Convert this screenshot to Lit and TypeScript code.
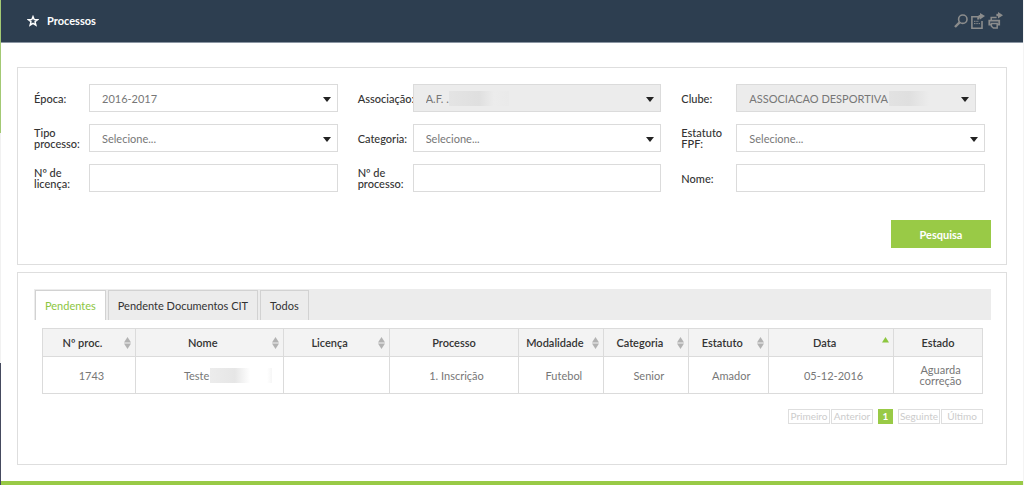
import { LitElement, html, css, svg, nothing } from "lit";
import { customElement, state } from "lit/decorators.js";
import { classMap } from "lit/directives/class-map.js";

interface Field {
  id: string;
  label: string;
  kind: "select" | "text";
  value?: string;
  disabled?: boolean;
  mask?: string;
}

interface Column {
  title: string;
  width: number;
  sort?: "both" | "asc";
}

const FIELDS: Field[] = [
  { id: "epoca", label: "Época:", kind: "select", value: "2016-2017" },
  { id: "associacao", label: "Associação:", kind: "select", value: "A.F. .", disabled: true, mask: "association" },
  { id: "clube", label: "Clube:", kind: "select", value: "ASSOCIACAO DESPORTIVA", disabled: true, mask: "club" },
  { id: "tipo", label: "Tipo processo:", kind: "select", value: "Selecione..." },
  { id: "categoria", label: "Categoria:", kind: "select", value: "Selecione..." },
  { id: "estatuto", label: "Estatuto FPF:", kind: "select", value: "Selecione..." },
  { id: "licenca", label: "Nº de licença:", kind: "text" },
  { id: "processo", label: "Nº de processo:", kind: "text" },
  { id: "nome", label: "Nome:", kind: "text" },
];

const COLUMNS: Column[] = [
  { title: "Nº proc.", width: 93, sort: "both" },
  { title: "Nome", width: 148, sort: "both" },
  { title: "Licença", width: 106, sort: "both" },
  { title: "Processo", width: 130 },
  { title: "Modalidade", width: 85, sort: "both" },
  { title: "Categoria", width: 85, sort: "both" },
  { title: "Estatuto", width: 80, sort: "both" },
  { title: "Data", width: 125, sort: "asc" },
  { title: "Estado", width: 89 },
];

const TABS = ["Pendentes", "Pendente Documentos CIT", "Todos"];

const starIcon = svg`<svg width="12" height="12" viewBox="0 0 12 12" fill="none" stroke="#fff" stroke-width="1.4" stroke-linejoin="miter">
  <path d="M6 1.6 7.2 4.6 10.6 4.7 8 6.8 8.9 10.2 6 8.3 3.1 10.2 4 6.8 1.4 4.7 4.8 4.6Z" /></svg>`;

const searchIcon = svg`<svg width="14" height="14" viewBox="0 0 14 14" fill="none" stroke="#8b8c8c">
  <circle cx="8.8" cy="5.2" r="4.2" stroke-width="1.6" /><path d="M5.6 8.4 1 13" stroke-width="2.4" /></svg>`;

const exportIcon = svg`<svg width="16" height="17" viewBox="0 0 16 17" fill="none" stroke="#8b8c8c">
  <path d="M8 3.7H1.9V15.3H12V8" stroke-width="1.6" />
  <path d="M4 8.3H9M4 10.6H10" stroke-width="1" stroke-dasharray="1.5 .8" />
  <path d="M8.2 6.5C8.2 4 9.2 2.9 11 2.9" stroke-width="2.2" />
  <path d="M10 0 15 3 10 6.4Z" fill="#8b8c8c" stroke="none" /></svg>`;

const printIcon = svg`<svg width="16" height="18" viewBox="0 0 16 18" fill="none" stroke="#8b8c8c">
  <path d="M3.2 8V5.6H8.6" stroke-width="1.5" />
  <path d="M3 12.7H1.3V8.6H11.2V12.7H9.6" stroke-width="1.8" />
  <path d="M3.4 11.4H9.2V16H5.4L3.4 14.2Z" stroke-width="1.5" />
  <path d="M8.4 3H11" stroke-width="2.4" />
  <path d="M10 0 15 3.2 10 6.6Z" fill="#8b8c8c" stroke="none" /></svg>`;

const sortBoth = svg`<svg class="arrows" width="7" height="12" viewBox="0 0 7 12" fill="#b2b2b2">
  <path d="M3.5 0 7 5.4H0Z" /><path d="M3.5 12 0 6.6H7Z" /></svg>`;

const sortAsc = svg`<svg class="arrows" width="7" height="12" viewBox="0 0 7 12" fill="#8cc63f"><path d="M3.5 0 7 5.4H0Z" /></svg>`;

const caret = svg`<svg class="caret" width="8" height="5" viewBox="0 0 8 5" fill="#222"><path d="M0 0H8L4 5Z" /></svg>`;

@customElement("app-root")
export class AppRoot extends LitElement {
  static styles = css`
    :host {
      display: grid;
      grid-template-columns: 1px 1fr;
      min-height: 100vh;
      box-sizing: border-box;
      background: #fff;
      border-right: 1px solid #f4f4f4;
      font: 11px/11px Lato, "Open Sans", sans-serif;
      color: #777;
    }
    * { box-sizing: border-box; }
    button, input, select { font: inherit; color: inherit; margin: 0; border-radius: 0; }
    button { cursor: pointer; }
    svg { display: block; }

    .rail { display: flex; flex-direction: column; }
    .rail-top { height: 133px; background: #a3c974; }
    .rail-mid { height: 230px; background: #f1f1f1; }
    .rail-end { flex: 1; background: #454a5e; }

    .page { display: flex; flex-direction: column; min-width: 0; border-bottom: 5px solid #99ca46; }
    .bar {
      display: flex;
      align-items: center;
      height: 43px;
      padding: 0 19px 0 26px;
      background: #2d3e50;
      border-bottom: 1px solid #8b96a3;
    }
    .title { margin: 0 auto 0 8px; font-size: 11px; line-height: 14px; font-weight: 700; color: #fff; }
    .tools { display: flex; align-items: center; gap: 2px; }
    .tool { padding: 0; border: 0; background: none; }

    .content { display: flex; flex-direction: column; flex: 1; gap: 7px; padding: 24px 16px 16px; }
    .panel { border: 1px solid #dedede; padding: 16px 15px 16px 16px; }
    .results { flex: 1; padding-bottom: 40px; }

    .fields {
      display: grid;
      grid-template-columns: repeat(3, 1fr);
      gap: 12px 20px;
      padding-right: 6px;
    }
    .field { display: grid; grid-template-columns: 55px 1fr; align-items: center; }
    .label { color: #333; font-weight: 500; white-space: normal; }
    .control { position: relative; display: flex; }
    .short { margin-right: 9px; }
    .box {
      width: 100%;
      height: 28px;
      padding: 0 12px;
      border: 1px solid #dbdbdb;
      background: #fff;
      outline: 0;
      appearance: none;
    }
    .box:disabled { background: #ececec; opacity: 1; color: #777; }
    .caret { position: absolute; right: 7px; top: 13px; pointer-events: none; }
    .mask { position: absolute; top: 7px; height: 15px; }
    .association { left: 36px; width: 60px; background: linear-gradient(90deg, #e4e4e4, #dfdfdf 50%, #ececec 75%, #eaeaea); }
    .club { left: 153px; width: 40px; background: linear-gradient(90deg, #e2e2e2, #dfdfdf 50%, #ececec); }
    .actions { display: flex; justify-content: flex-end; padding-top: 28px; }
    .search { width: 100px; height: 28px; padding: 0; border: 0; background: #99ca46; color: #fff; font-weight: 700; }

    .tabs { display: flex; gap: 2px; height: 31px; padding: 1px 0 0 1px; background: #ececec; }
    .tab {
      padding: 0 9px;
      border: 1px solid #d2d2d2;
      border-bottom: 0;
      background: #ececec;
      color: #333;
    }
    .active { background: #fff; color: #8cc63f; }
    .body { padding: 8px 8px 0; }

    .grid { width: 100%; table-layout: fixed; border-collapse: collapse; text-align: center; }
    .head { height: 28px; padding: 0 4px; border: 1px solid #dbdbdb; background: #f3f3f3; color: #333; font-weight: 600; }
    .sorter { display: flex; align-items: center; }
    .arrows { margin-left: 6px; }
    .name { flex: 1; }
    .cell { height: 37px; padding: 0 16px 0 21px; border: 1px solid #dbdbdb; }
    .person { display: flex; align-items: center; padding-left: 27px; gap: 1px; }
    .blot {
      width: 62px;
      height: 15px;
      flex: none;
      background: linear-gradient(90deg, #ececec, #e6e6e6 40%, #fff 65%, #fff 92%, #f6f6f6);
    }

    .pager { display: flex; justify-content: flex-end; gap: 1px; padding-top: 15px; }
    .step { width: 42px; height: 15px; padding: 0; border: 1px solid #dedede; background: #fff; color: #ccc; font-size: 10px; line-height: 13px; }
    .current { width: 15px; margin: 0 4px; border-color: #99ca46; background: #99ca46; color: #fff; font-weight: 700; }
  `;

  @state() private tab = 0;

  private field(f: Field) {
    return html`<div class="field">
      <label class="label" for=${f.id}>${f.label}</label>
      <div class=${classMap({ control: true, short: f.id === "clube" })}>
        ${f.kind === "select"
          ? html`<select class="box" id=${f.id} ?disabled=${!!f.disabled}><option>${f.value}</option></select>${caret}`
          : html`<input class="box" id=${f.id} type="text" />`}
        ${f.mask ? html`<span class="mask ${f.mask}"></span>` : nothing}
      </div>
    </div>`;
  }

  private head(c: Column) {
    return html`<th class="head" scope="col">
      <div class="sorter"><span class="name">${c.title}</span>${c.sort === "both" ? sortBoth : c.sort === "asc" ? sortAsc : nothing}</div>
    </th>`;
  }

  render() {
    const person = html`<div class="person"><span>Teste</span><span class="blot"></span></div>`;
    const row = ["1743", person, "", "1. Inscrição", "Futebol", "Senior", "Amador", "05-12-2016", "Aguarda correção"];
    return html`
      <div class="rail"><div class="rail-top"></div><div class="rail-mid"></div><div class="rail-end"></div></div>
      <div class="page">
        <header class="bar">
          ${starIcon}
          <h1 class="title">Processos</h1>
          <div class="tools">
            <button class="tool" aria-label="Pesquisar">${searchIcon}</button>
            <button class="tool" aria-label="Exportar">${exportIcon}</button>
            <button class="tool" aria-label="Imprimir">${printIcon}</button>
          </div>
        </header>
        <main class="content">
          <form class="panel" @submit=${(e: Event) => e.preventDefault()}>
            <div class="fields">${FIELDS.map((f) => this.field(f))}</div>
            <div class="actions"><button class="search" type="submit">Pesquisa</button></div>
          </form>
          <section class="panel results">
            <div class="tabs" role="tablist">
              ${TABS.map((t, i) => html`<button role="tab" class=${classMap({ tab: true, active: i === this.tab })}
                aria-selected=${i === this.tab} @click=${() => (this.tab = i)}>${t}</button>`)}
            </div>
            <div class="body">
              <table class="grid">
                <colgroup>${COLUMNS.map((c) => html`<col style="width:${c.width / 9.41}%" />`)}</colgroup>
                <thead><tr>${COLUMNS.map((c) => this.head(c))}</tr></thead>
                <tbody><tr>${row.map((v) => html`<td class="cell">${v}</td>`)}</tr></tbody>
              </table>
              <nav class="pager" aria-label="Paginação">
                <button class="step">Primeiro</button>
                <button class="step">Anterior</button>
                <button class="step current">1</button>
                <button class="step">Seguinte</button>
                <button class="step">Último</button>
              </nav>
            </div>
          </section>
        </main>
      </div>
    `;
  }
}
